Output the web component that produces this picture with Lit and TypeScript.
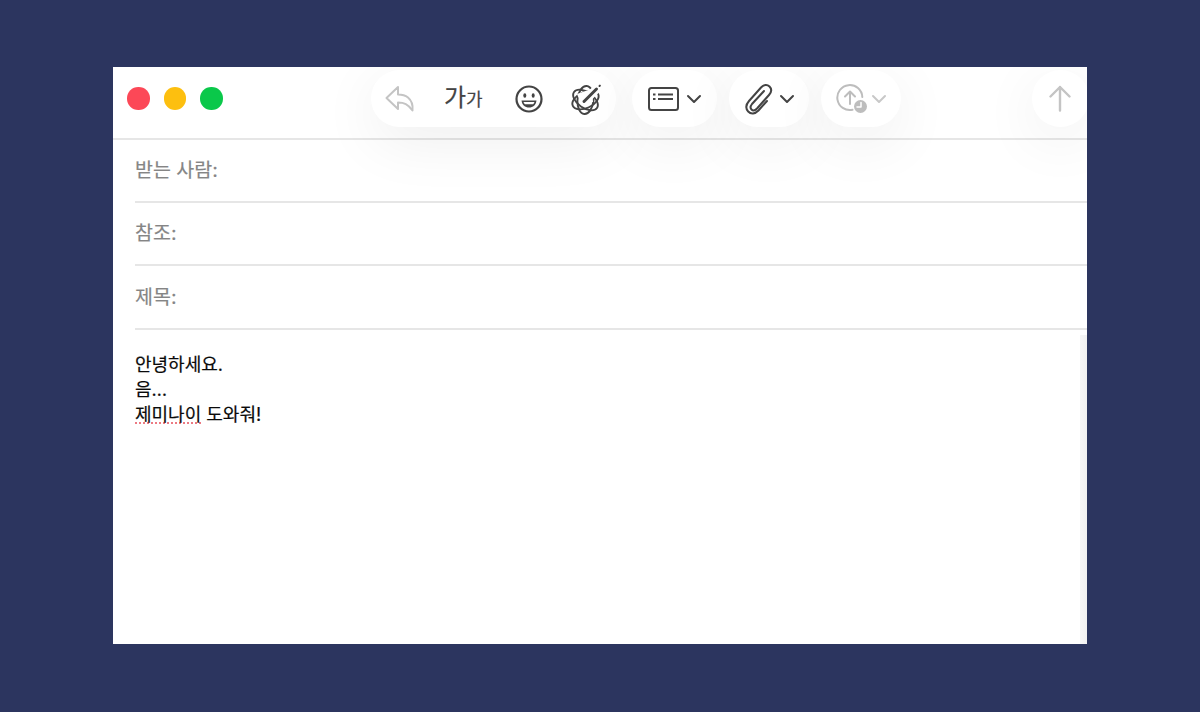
import { LitElement, html, css } from "lit";
import { customElement } from "lit/decorators.js";

const chevron = (c: string) => html`<svg class="chev" width="16" height="10" viewBox="0 0 16 10" fill="none" stroke="${c}" stroke-width="2" stroke-linecap="round" stroke-linejoin="round"><path d="M2 2l6 6 6-6"/></svg>`;

@customElement("app-root")
export class AppRoot extends LitElement {
  static styles = css`
    :host { display: block; width: 1200px; height: 712px; background: #2c355f; font-family: "Inter", "Noto Sans CJK KR", sans-serif; }
    .page { height: 712px; padding: 67px 113px 68px; box-sizing: border-box; }
    .win { width: 974px; height: 577px; background: #fff; overflow: hidden; display: flex; flex-direction: column; position: relative; }
    .bar { flex: none; display: flex; align-items: flex-start; border-bottom: 2px solid #e6e6e6; padding: 3px 0 0 14px; position: relative; z-index: 2; box-sizing: border-box; height: 73px; }
    .lights { display: flex; gap: 14px; width: 244px; flex: none; padding-top: 17px; }
    .dot { width: 22.5px; height: 22.5px; border-radius: 50%; }
    .red { background: #fc4857; } .yel { background: #fdbf0f; } .grn { background: #0ac84a; }
    .tools { display: flex; gap: 12px; align-items: center; height: 57px; }
    .pill { height: 57px; background: #fff; border-radius: 29px; box-shadow: 0 14px 60px rgba(0,0,0,.07); display: flex; align-items: center; box-sizing: border-box; flex: none; }
    .p1 { width: 245px; padding-left: 14px; margin-right: 4px; }
    .p2 { width: 85px; padding-left: 16px; gap: 7px; }
    .p3 { width: 80px; padding-left: 16px; gap: 6px; }
    .p4 { width: 80px; padding-left: 15px; gap: 3px; }
    .send { width: 57px; justify-content: center; margin-left: 119px; border-radius: 50%; padding-right: 1px; }
    .ga { margin-left: 29px; color: #444; font-size: 24px; line-height: 28px; width: 42px; white-space: nowrap; -webkit-text-stroke: .2px #444; }
    .ga small { font-size: 18px; }
    .smile { margin-left: 29px; }
    .spark { margin-left: 27px; }
    .row { flex: none; margin-left: 22px; border-bottom: 2px solid #e6e6e6; color: #858585; font-size: 19.5px; -webkit-text-stroke: .2px #858585; display: flex; align-items: center; padding-bottom: 4px; box-sizing: content-box; height: 57px; }
    .row.last { height: 58px; }
    .body { flex: 1; padding: 22px 0 0 22px; color: #0a0a0a; font-size: 18px; -webkit-text-stroke: .2px #0a0a0a; line-height: 25px; }
    .body div { height: 25px; white-space: nowrap; }
    .ell { letter-spacing: 1px; }
    .sq { text-decoration: underline dotted #ec7a83 2px; text-underline-offset: 1px; }
    .scroll { position: absolute; right: 0; top: 268px; bottom: 0; width: 7px; background: linear-gradient(to right, #f7f7f7, #f1f1f1); }
  `;

  render() {
    return html`<div class="page"><div class="win">
      <div class="bar">
        <div class="lights"><div class="dot red"></div><div class="dot yel"></div><div class="dot grn"></div></div>
        <div class="tools">
          <div class="pill p1">
            <svg width="30" height="28" viewBox="0 0 30 28" fill="none" stroke="#c4c4c4" stroke-width="2" stroke-linejoin="round" stroke-linecap="round">
              <path d="M13 2L1.500 13 13 24v-6.500c6 0 10 1.500 14.500 8 .8-7-1-10-4.500-13-2.500-2-6-3-10-3z"/>
            </svg>
            <div class="ga">가<small>가</small></div>
            <svg class="smile" width="28" height="28" viewBox="0 0 28 28" fill="none" stroke="#444" stroke-width="2.200">
              <circle cx="14" cy="14" r="12.500"/>
              <ellipse cx="9.800" cy="10.500" rx="1.500" ry="2.200" fill="#444" stroke="none"/>
              <ellipse cx="18.200" cy="10.500" rx="1.500" ry="2.200" fill="#444" stroke="none"/>
              <path d="M6.500 15.500h15c-.5 4.500-3.500 7-7.500 7s-7-2.500-7.500-7z" fill="#444" stroke="none"/>
              <path d="M8.500 17h11c-.3 1-.8 1.700-1.400 2.200H9.900c-.6-.5-1.100-1.200-1.400-2.200z" fill="#fff" stroke="none"/>
            </svg>
            <svg class="spark" width="32" height="32" viewBox="0 0 32 32" fill="none" stroke="#444" stroke-width="1.900" stroke-linecap="round" stroke-linejoin="round">
              <ellipse cx="15.500" cy="17" rx="14" ry="8" transform="rotate(35 15.500 17)"/>
              <ellipse cx="15.500" cy="17" rx="14" ry="8" transform="rotate(95 15.500 17)"/>
              <ellipse cx="15.500" cy="17" rx="14" ry="8" transform="rotate(155 15.500 17)"/>
              <path d="M7 11l14-5 2 13-12 2z" fill="#fff" stroke="none"/>
              <path d="M15.500 17L29.500 3" stroke="#fff" stroke-width="8.500"/>
              <path d="M14 18.500L26.500 6" stroke-width="3"/>
              <path d="M29.500 3l.4-.4" stroke-width="2"/>
            </svg>
          </div>
          <div class="pill p2">
            <svg width="31" height="24" viewBox="0 0 31 24" fill="none" stroke="#444" stroke-width="2">
              <rect x="1" y="1" width="29" height="22" rx="2.500"/>
              <path d="M5 7.500h2.500M5 12h2.500M10 7.500h15M10 12h15" stroke-width="1.800"/>
            </svg>
            ${chevron("#444")}
          </div>
          <div class="pill p3">
            <svg width="28" height="32" viewBox="0 0 28 32" fill="none" stroke="#444" stroke-width="2" stroke-linecap="round">
              <path d="M19 8L7 21c-2 2.500-1.500 4.500-.5 5.500 1.500 1.500 3.500 1 5.500-1L24 12c3-3.500 2.500-6.500.5-8.500-2.500-2.500-5.500-2-8.500 1L4 18c-3.500 4-3 8-.8 10.500 2.800 3 6.800 2.500 10.300-1L22 18"/>
            </svg>
            ${chevron("#444")}
          </div>
          <div class="pill p4">
            <svg width="32" height="30" viewBox="0 0 32 30" fill="none" stroke="#bdbdbd" stroke-width="2" stroke-linecap="round" stroke-linejoin="round">
              <path d="M16.500 25.800A12.500 12.500 0 1 1 26.300 13"/>
              <path d="M14 20V8M9 12.500L14 7.500l5 5"/>
              <circle cx="24.500" cy="22.500" r="6.500" fill="#bdbdbd" stroke="none"/>
              <path d="M25 18.500v4.500h-4" stroke="#fff" stroke-width="1.500"/>
            </svg>
            ${chevron("#c8c8c8")}
          </div>
          <div class="pill send">
            <svg width="22" height="27" viewBox="0 0 22 27" fill="none" stroke="#c4c4c4" stroke-width="2.400" stroke-linecap="round" stroke-linejoin="round"><path d="M11 25.500V2M1.500 11.500L11 2l9.500 9.500"/></svg>
          </div>
        </div>
      </div>
      <div class="row">받는 사람:</div>
      <div class="row">참조:</div>
      <div class="row last">제목:</div>
      <div class="body">
        <div>안녕하세요.</div>
        <div>음<span class="ell">…</span></div>
        <div><span class="sq">제미나이</span> 도와줘!</div>
      </div>
      <div class="scroll"></div>
    </div></div>`;
  }
}
